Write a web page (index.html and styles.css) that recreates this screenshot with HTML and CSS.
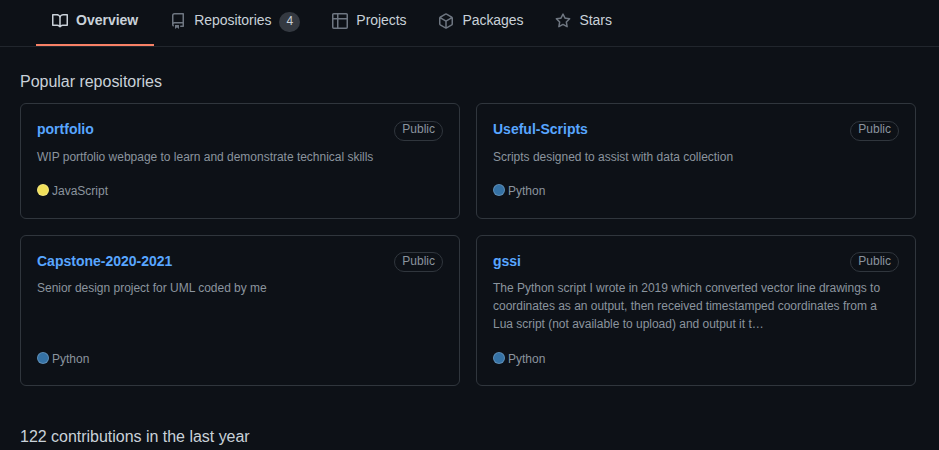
FILE: index.html
```html
<!DOCTYPE html>
<html lang="en">
<head>
<meta charset="utf-8">
<title>Overview</title>
<link rel="stylesheet" href="styles.css">
</head>
<body>
<nav class="tabs">
  <a class="tab tab-active"><svg class="icon" viewBox="0 0 16 16"><path fill-rule="evenodd" d="M0 1.75A.75.75 0 01.75 1h4.253c1.227 0 2.317.59 3 1.501A3.744 3.744 0 0111.006 1h4.245a.75.75 0 01.75.75v10.5a.75.75 0 01-.75.75h-4.507a2.25 2.25 0 00-1.591.659l-.622.621a.75.75 0 01-1.06 0l-.622-.621A2.25 2.25 0 005.258 13H.75a.75.75 0 01-.75-.75V1.75zm8.755 3a2.25 2.25 0 012.25-2.25H14.5v9h-3.757c-.71 0-1.4.201-1.992.572l.004-7.322zm-1.504 7.324l.004-5.073-.002-2.253A2.25 2.25 0 005.003 2.5H1.5v9h3.757a3.75 3.75 0 011.994.574z"/></svg><span class="tab-text">Overview</span></a>
  <a class="tab"><svg class="icon" viewBox="0 0 16 16"><path fill-rule="evenodd" d="M2 2.5A2.5 2.5 0 014.5 0h8.75a.75.75 0 01.75.75v12.5a.75.75 0 01-.75.75h-2.5a.75.75 0 110-1.5h1.75v-2h-8a1 1 0 00-.714 1.7.75.75 0 01-1.072 1.05A2.495 2.495 0 012 11.5v-9zm10.5-1V9h-8c-.356 0-.694.074-1 .208V2.5a1 1 0 011-1h8zM5 12.25v3.25a.25.25 0 00.4.2l1.45-1.087a.25.25 0 01.3 0L8.6 15.7a.25.25 0 00.4-.2v-3.25a.25.25 0 00-.25-.25h-3.5a.25.25 0 00-.25.25z"/></svg><span class="tab-text">Repositories</span><span class="counter">4</span></a>
  <a class="tab"><svg class="icon" viewBox="0 0 16 16"><path fill-rule="evenodd" d="M0 1.75C0 .784.784 0 1.75 0h12.5C15.216 0 16 .784 16 1.75v12.5A1.75 1.75 0 0114.25 16H1.75A1.75 1.75 0 010 14.25V1.75zM1.5 6.5v7.75c0 .138.112.25.25.25H5v-8H1.5zM5 5H1.5V1.75a.25.25 0 01.25-.25H5V5zm1.5 1.5v8h7.75a.25.25 0 00.25-.25V6.5h-8zm8-1.5h-8V1.5h7.75a.25.25 0 01.25.25V5z"/></svg><span class="tab-text">Projects</span></a>
  <a class="tab"><svg class="icon" viewBox="0 0 16 16"><path fill-rule="evenodd" d="M8.878.392a1.75 1.75 0 00-1.756 0l-5.25 3.045A1.75 1.75 0 001 4.951v6.098c0 .624.332 1.2.872 1.514l5.25 3.045a1.75 1.75 0 001.756 0l5.25-3.045c.54-.313.872-.89.872-1.514V4.951c0-.624-.332-1.2-.872-1.514L8.878.392zM7.875 1.69a.25.25 0 01.25 0l4.63 2.685L8 7.133 3.245 4.375l4.63-2.685zM2.5 5.677v5.372c0 .09.047.171.125.216l4.625 2.683V8.432L2.5 5.677zm6.25 8.271l4.625-2.683a.25.25 0 00.125-.216V5.677L8.75 8.432v5.516z"/></svg><span class="tab-text">Packages</span></a>
  <a class="tab"><svg class="icon" viewBox="0 0 16 16"><path fill-rule="evenodd" d="M8 .25a.75.75 0 01.673.418l1.882 3.815 4.21.612a.75.75 0 01.416 1.279l-3.046 2.97.719 4.192a.75.75 0 01-1.088.791L8 12.347l-3.766 1.98a.75.75 0 01-1.088-.79l.72-4.194L.818 6.374a.75.75 0 01.416-1.28l4.21-.611L7.327.668A.75.75 0 018 .25zm0 2.445L6.615 5.5a.75.75 0 01-.564.41l-3.097.45 2.24 2.184a.75.75 0 01.216.664l-.528 3.084 2.769-1.456a.75.75 0 01.698 0l2.77 1.456-.53-3.084a.75.75 0 01.216-.664l2.24-2.183-3.096-.45a.75.75 0 01-.564-.41L8 2.694z"/></svg><span class="tab-text">Stars</span></a>
</nav>
<main class="content">
  <h2 class="heading">Popular repositories</h2>
  <div class="repos">
    <article class="repo repo-short">
      <div class="repo-head"><a class="repo-name">portfolio</a><span class="label">Public</span></div>
      <p class="desc">WIP portfolio webpage to learn and demonstrate technical skills</p>
      <p class="lang"><span class="dot dot-js"></span><span>JavaScript</span></p>
    </article>
    <article class="repo repo-short">
      <div class="repo-head"><a class="repo-name">Useful-Scripts</a><span class="label">Public</span></div>
      <p class="desc">Scripts designed to assist with data collection</p>
      <p class="lang"><span class="dot"></span><span>Python</span></p>
    </article>
    <article class="repo">
      <div class="repo-head"><a class="repo-name">Capstone-2020-2021</a><span class="label">Public</span></div>
      <p class="desc">Senior design project for UML coded by me</p>
      <p class="lang"><span class="dot"></span><span>Python</span></p>
    </article>
    <article class="repo">
      <div class="repo-head"><a class="repo-name">gssi</a><span class="label">Public</span></div>
      <p class="desc">The Python script I wrote in 2019 which converted vector line drawings to<br>coordinates as an output, then received timestamped coordinates from a<br>Lua script (not available to upload) and output it t…</p>
      <p class="lang"><span class="dot"></span><span>Python</span></p>
    </article>
  </div>
  <h2 class="heading">122 contributions in the last year</h2>
</main>
</body>
</html>
```
FILE: styles.css
```css
* { box-sizing: border-box; }
body {
  margin: 0;
  height: 450px;
  overflow: hidden;
  background: #0d1117;
  color: #c9d1d9;
  font: 14px/20px "Liberation Sans", Arial, sans-serif;
}
h2, p { margin: 0; font-weight: 400; }
.tabs {
  display: flex;
  height: 47px;
  padding-left: 36px;
  border-bottom: 1px solid #21262d;
}
.tab {
  display: flex;
  align-items: center;
  height: 46px;
  padding: 0 16px 4px;
  white-space: nowrap;
}
.tab-active {
  padding-bottom: 2px;
  border-bottom: 2px solid #f78166;
  font-weight: 700;
}
.tab-text {
  margin-top: -2px;
  letter-spacing: -0.06px;
}
.tab-active .tab-text { letter-spacing: 0; }
.icon {
  width: 16px;
  height: 16px;
  margin-right: 8px;
  fill: #6e7681;
}
.tab-active .icon { fill: #c9d1d9; }
.counter {
  width: 21px;
  height: 20px;
  margin-top: 2px;
  margin-left: 8px;
  border-radius: 10px;
  background: #343941;
  font-size: 12px;
  line-height: 19px;
  text-align: center;
}
.content { padding: 23px 23px 0 20px; }
.heading {
  font-size: 16px;
  line-height: 24px;
  letter-spacing: -0.02px;
}
.repos {
  display: grid;
  grid-template-columns: 440px 440px;
  grid-template-rows: 116px 151px;
  gap: 16px;
  margin: 9px 0 39px;
}
.repo {
  display: flex;
  flex-direction: column;
  padding: 16px;
  border: 1px solid #30363d;
  border-radius: 6px;
}
.repo-head {
  display: flex;
  justify-content: space-between;
  height: 20px;
}
.repo-name { color: #58a6ff; font-weight: 700; line-height: 18px; }
.label {
  height: 20px;
  padding: 0 7px;
  border: 1px solid #30363d;
  border-radius: 10px;
  color: #8b949e;
  font-size: 12px;
  line-height: 17px;
}
.repo-short .label {
  margin: 1px 0 -1px;
  line-height: 15px;
}
.desc {
  margin-top: 7px;
  color: #8b949e;
  font-size: 12px;
  line-height: 18px;
  letter-spacing: -0.015px;
}
.repo-short .desc { margin-top: 8px; }
.lang {
  display: flex;
  align-items: center;
  gap: 3px;
  margin-top: auto;
  margin-bottom: 1px;
  color: #8b949e;
  font-size: 12px;
  line-height: 18px;
}
.repo-short .lang { margin-bottom: 2px; }
.dot {
  width: 12px;
  height: 12px;
  margin-bottom: 2px;
  border: 1px solid rgba(255, 255, 255, 0.2);
  border-radius: 50%;
  background: #3572a5;
}
.dot-js { background: #f1e05a; }
```
